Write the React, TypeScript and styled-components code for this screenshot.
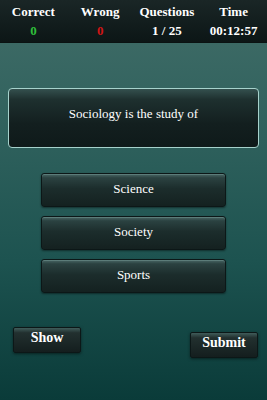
import styled, { createGlobalStyle } from "styled-components";

const Global = createGlobalStyle`
  html, body {
    margin: 0;
    padding: 0;
  }
  body {
    width: 267px;
    height: 400px;
    overflow: hidden;
    font-family: "Liberation Serif", "DejaVu Serif", serif;
  }
`;

const Screen = styled.div`
  width: 267px;
  height: 400px;
  background: linear-gradient(180deg, #416d68 0%, #2e605c 35%, #1d5350 65%, #0a3b39 100%);
  color: #fff;
  display: flex;
  flex-direction: column;
`;

const Stats = styled.div`
  height: 42px;
  display: grid;
  grid-template-columns: repeat(4, 1fr);
  background: linear-gradient(180deg, #1a2626 0%, #0c1616 100%);
  border-bottom: 1px solid #0a1212;
`;

const Stat = styled.div`
  display: flex;
  flex-direction: column;
  align-items: center;
  padding-top: 4px;
  font-weight: bold;
`;

const Label = styled.span`
  font-size: 13px;
  line-height: 15px;
`;

const Value = styled.span<{ $tone?: string }>`
  margin-top: 4px;
  font-size: 13px;
  line-height: 15px;
  color: ${(p) => p.$tone || "#fff"};
`;

const Question = styled.div`
  margin: 45px 8px 0;
  height: 60px;
  box-sizing: border-box;
  border: 1px solid #a6d2cc;
  border-radius: 4px;
  background: linear-gradient(180deg, #34504e 0%, #1e302f 18%, #131f1f 60%, #0f1a1a 100%);
  display: flex;
  align-items: center;
  justify-content: center;
  font-size: 13px;
  padding-bottom: 8px;
`;

const Options = styled.div`
  margin: 25px auto 0;
  width: 185px;
  display: flex;
  flex-direction: column;
  gap: 9px;
`;

const Option = styled.button`
  height: 34px;
  border: 1px solid #0c1717;
  border-radius: 3px;
  background: linear-gradient(180deg, #4a6866 0%, #2b4241 12%, #1c2d2c 45%, #142120 100%);
  box-shadow: 0 1px 2px rgba(0, 0, 0, 0.45), inset 0 1px 0 rgba(160, 200, 195, 0.25);
  color: #fff;
  font-family: "Liberation Serif", "DejaVu Serif", serif;
  font-size: 13px;
  padding: 0 0 2px;
`;

const Actions = styled.div`
  margin-top: 34px;
  padding: 0 9px 0 13px;
  display: flex;
  justify-content: space-between;
  align-items: flex-start;
`;

const Action = styled.button<{ $drop?: number }>`
  margin-top: ${(p) => p.$drop || 0}px;
  width: 68px;
  height: 26px;
  border: 1px solid #0c1717;
  border-radius: 2px;
  background: linear-gradient(180deg, #405c5a 0%, #22302f 20%, #141e1e 100%);
  box-shadow: 0 1px 3px rgba(0, 0, 0, 0.5);
  color: #fff;
  font-family: "Liberation Serif", "DejaVu Serif", serif;
  font-weight: bold;
  font-size: 14px;
  padding: 0 0 4px;
`;

export default function App() {
  return (
    <Screen>
      <Global />
      <Stats>
        <Stat>
          <Label>Correct</Label>
          <Value $tone="#2fbf3a">0</Value>
        </Stat>
        <Stat>
          <Label>Wrong</Label>
          <Value $tone="#d01515">0</Value>
        </Stat>
        <Stat>
          <Label>Questions</Label>
          <Value>1 / 25</Value>
        </Stat>
        <Stat>
          <Label>Time</Label>
          <Value>00:12:57</Value>
        </Stat>
      </Stats>
      <Question>Sociology is the study of</Question>
      <Options>
        <Option>Science</Option>
        <Option>Society</Option>
        <Option>Sports</Option>
      </Options>
      <Actions>
        <Action>Show</Action>
        <Action $drop={5}>Submit</Action>
      </Actions>
    </Screen>
  );
}
